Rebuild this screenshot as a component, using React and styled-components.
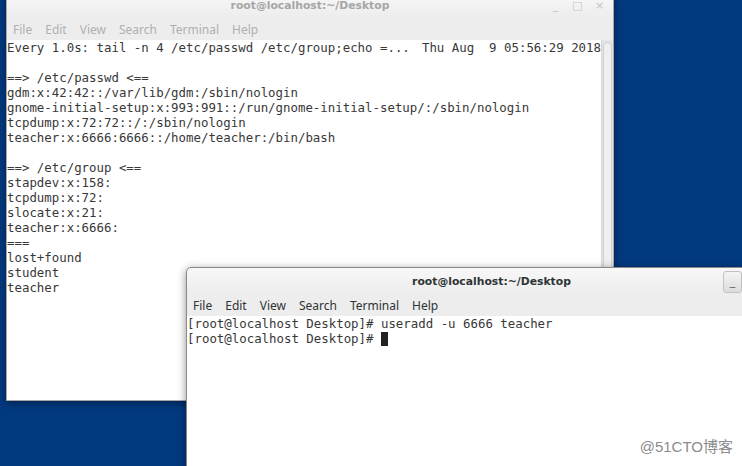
import styled, { createGlobalStyle } from 'styled-components';

const GlobalStyle = createGlobalStyle`
  html, body {
    margin: 0;
    padding: 0;
    overflow: hidden;
    background: #023a80;
  }
`;

const MENU = ['File', 'Edit', 'View', 'Search', 'Terminal', 'Help'];

const WATCH_LINES = [
  '',
  '==> /etc/passwd <==',
  'gdm:x:42:42::/var/lib/gdm:/sbin/nologin',
  'gnome-initial-setup:x:993:991::/run/gnome-initial-setup/:/sbin/nologin',
  'tcpdump:x:72:72::/:/sbin/nologin',
  'teacher:x:6666:6666::/home/teacher:/bin/bash',
  '',
  '==> /etc/group <==',
  'stapdev:x:158:',
  'tcpdump:x:72:',
  'slocate:x:21:',
  'teacher:x:6666:',
  '===',
  'lost+found',
  'student',
  'teacher',
];

function Window({ left, top, width, height, active, scrollbar, controls = ['_', '□', '×'], children }) {
  return (
    <Frame style={{ left, top, width, height }} $active={active}>
      <TitleBar>
        <Title $active={active}>root@localhost:~/Desktop</Title>
        <Controls>
          {controls.map((c) => (
            <Control key={c} $active={active}>{c}</Control>
          ))}
        </Controls>
      </TitleBar>
      <MenuBar>
        {MENU.map((m) => (
          <MenuItem key={m} $active={active}>{m}</MenuItem>
        ))}
      </MenuBar>
      <Body>
        <Screen>{children}</Screen>
        {scrollbar && (
          <Scrollbar>
            <Slider />
          </Scrollbar>
        )}
      </Body>
    </Frame>
  );
}

export default function App() {
  return (
    <Desktop>
      <GlobalStyle />
      <Window left={6} top={-9} width={608} height={410} scrollbar>
        <Line $split>
          <span>Every 1.0s: tail -n 4 /etc/passwd /etc/group;echo =...</span>
          <span>Thu Aug  9 05:56:29 2018</span>
        </Line>
        {WATCH_LINES.map((l, i) => (
          <Line key={i}>{l}</Line>
        ))}
      </Window>
      <Window left={186} top={267} width={561} height={220} active controls={['_']}>
        <Line>[root@localhost Desktop]# useradd -u 6666 teacher</Line>
        <Line>
          [root@localhost Desktop]# <Cursor />
        </Line>
      </Window>
      <Watermark>@51CTO博客</Watermark>
    </Desktop>
  );
}

const Desktop = styled.div`
  position: relative;
  width: 742px;
  height: 466px;
  overflow: hidden;
  background: #023a80;
`;

const Frame = styled.div`
  position: absolute;
  display: flex;
  flex-direction: column;
  box-sizing: border-box;
  background: #ededed;
  border: 1px solid ${(p) => (p.$active ? '#8a8a8a' : '#a8a8a8')};
  border-radius: 5px 5px 0 0;
  box-shadow: 0 2px 8px rgba(0, 0, 0, 0.45);
`;

const TitleBar = styled.div`
  position: relative;
  height: 27px;
  display: flex;
  align-items: center;
  justify-content: center;
  background: linear-gradient(#f8f8f8, #ececec);
  border-radius: 5px 5px 0 0;
`;

const Title = styled.div`
  font-family: 'DejaVu Sans', sans-serif;
  font-weight: bold;
  font-size: 10.8px;
  color: ${(p) => (p.$active ? '#2e3436' : '#a6a6a6')};
  transform: translateX(${(p) => (p.$active ? '25px' : '0')});
`;

const Controls = styled.div`
  position: absolute;
  right: 4px;
  top: 0;
  bottom: 0;
  display: flex;
  align-items: center;
  gap: 3px;
`;

const Control = styled.div`
  width: 19px;
  height: ${(p) => (p.$active ? '22px' : '10px')};
  display: flex;
  align-items: center;
  justify-content: center;
  font-family: 'DejaVu Sans', sans-serif;
  font-size: 11px;
  line-height: 10px;
  color: ${(p) => (p.$active ? '#5a5a5a' : '#c4c4c4')};
  box-sizing: border-box;
  border-radius: 3px;
  ${(p) =>
    p.$active &&
    `
    border: 1px solid #c2c2c2;
    background: linear-gradient(#f4f4f4, #dcdcdc);
  `}
`;

const MenuBar = styled.div`
  height: 21px;
  display: flex;
  align-items: center;
  gap: 13px;
  padding-left: 6px;
  background: #ededed;
`;

const MenuItem = styled.span`
  font-family: 'Noto Sans', sans-serif;
  font-size: 12px;
  color: ${(p) => (p.$active ? '#2e3436' : '#b0b0b0')};
`;

const Body = styled.div`
  flex: 1;
  display: flex;
  background: #fff;
  min-height: 0;
`;

const Screen = styled.div`
  flex: 1;
  font-family: 'DejaVu Sans Mono', monospace;
  font-size: 12.4px;
  line-height: 15px;
  color: #383838;
  white-space: pre;
  overflow: hidden;
`;

const Line = styled.div`
  height: 15px;
  ${(p) =>
    p.$split &&
    `
    display: flex;
    justify-content: space-between;
  `}
`;

const Cursor = styled.span`
  display: inline-block;
  width: 7px;
  height: 14px;
  vertical-align: -3px;
  background: #222;
`;

const Scrollbar = styled.div`
  width: 9px;
  background: #e4e4e4;
  border-left: 1px solid #d6d6d6;
  padding: 2px 1px;
`;

const Slider = styled.div`
  height: 100%;
  border-radius: 4px;
  background: #efefef;
  border: 1px solid #d0d0d0;
  box-sizing: border-box;
`;

const Watermark = styled.div`
  position: absolute;
  right: 9px;
  bottom: 10px;
  font-family: 'Liberation Sans', 'Noto Sans CJK SC', sans-serif;
  font-size: 15px;
  color: #8c8c8c;
`;
